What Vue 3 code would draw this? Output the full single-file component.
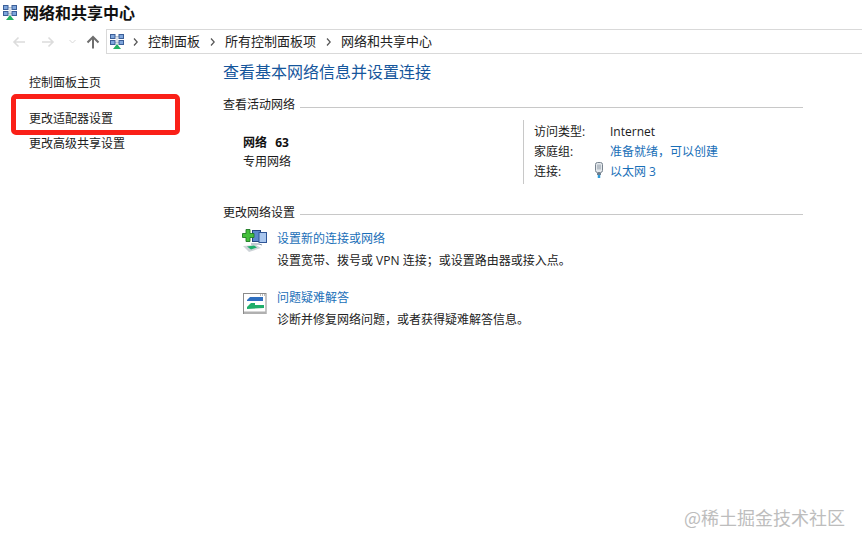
<script setup>
const crumbs = ['控制面板', '所有控制面板项', '网络和共享中心']
const sideLinks = [
  { text: '控制面板主页', cls: 'first' },
  { text: '更改适配器设置', cls: 'second' },
  { text: '更改高级共享设置', cls: 'third' }
]
</script>

<template>
  <div class="page">
    <header class="title-bar">
      <svg class="net-icon" viewBox="0 0 14 15" width="14" height="15">
        <path d="M5 2.500h4M5 8.500h4M7 2.500v8" stroke="#b9c6d4" fill="none" />
        <rect x=".5" y=".5" width="4.500" height="4" fill="#7fa6dc" stroke="#3c5f98" />
        <rect x="9" y=".5" width="4.500" height="4" fill="#7fa6dc" stroke="#3c5f98" />
        <rect x=".5" y="6.500" width="4.500" height="4" fill="#7fa6dc" stroke="#3c5f98" />
        <rect x="9" y="6.500" width="4.500" height="4" fill="#7fa6dc" stroke="#3c5f98" />
        <path d="M7 10l4 5H3z" fill="#22b060" />
      </svg>
      <h1 class="title">网络和共享中心</h1>
    </header>

    <nav class="nav-bar">
      <div class="nav-buttons">
        <svg width="14" height="12" viewBox="0 0 14 12" class="back"><path d="M13 6H2M6.500 1.500L2 6l4.500 4.500" fill="none" stroke="#dcdcdc" stroke-width="1.600" /></svg>
        <svg width="14" height="12" viewBox="0 0 14 12" class="forward"><path d="M1 6h11M7.500 1.500L12 6l-4.500 4.500" fill="none" stroke="#dcdcdc" stroke-width="1.600" /></svg>
        <svg width="7" height="5" viewBox="0 0 7 5" class="drop"><path d="M.5 1l3 3 3-3" fill="none" stroke="#d8d8d8" /></svg>
        <svg width="14" height="14" viewBox="0 0 14 14" class="up"><path d="M7 13.500V2M1.500 7.500L7 2l5.500 5.500" fill="none" stroke="#6e6e6e" stroke-width="2" /></svg>
      </div>
      <div class="address">
        <svg class="net-icon" viewBox="0 0 14 15" width="14" height="15">
          <path d="M5 2.500h4M5 8.500h4M7 2.500v8" stroke="#b9c6d4" fill="none" />
          <rect x=".5" y=".5" width="4.500" height="4" fill="#7fa6dc" stroke="#3c5f98" />
          <rect x="9" y=".5" width="4.500" height="4" fill="#7fa6dc" stroke="#3c5f98" />
          <rect x=".5" y="6.500" width="4.500" height="4" fill="#7fa6dc" stroke="#3c5f98" />
          <rect x="9" y="6.500" width="4.500" height="4" fill="#7fa6dc" stroke="#3c5f98" />
          <path d="M7 10l4 5H3z" fill="#22b060" />
        </svg>
        <template v-for="c in crumbs" :key="c">
          <svg class="chev" width="5" height="8" viewBox="0 0 5 8"><path d="M1 .5L4.200 4 1 7.500" fill="none" stroke="#555" stroke-width="1.200" /></svg>
          <span class="crumb">{{ c }}</span>
        </template>
      </div>
    </nav>

    <div class="body">
      <aside class="sidebar">
        <a v-for="l in sideLinks" :key="l.text" class="side-link" :class="l.cls">{{ l.text }}</a>
      </aside>

      <main class="main">
        <h2 class="heading">查看基本网络信息并设置连接</h2>

        <div class="section-head first-head"><span>查看活动网络</span><i class="rule"></i></div>
        <div class="active">
          <div class="net-name">
            <strong>网络&nbsp;&nbsp;<span class="num">63</span></strong>
            <span>专用网络</span>
          </div>
          <div class="net-info">
            <div class="info-row"><span class="label">访问类型:</span><span class="value">Internet</span></div>
            <div class="info-row"><span class="label">家庭组:</span><a class="value link">准备就绪，可以创建</a></div>
            <div class="info-row">
              <span class="label">连接:</span>
              <svg class="plug" width="10" height="16" viewBox="0 0 10 16">
                <rect x="1.500" y=".5" width="7" height="10" rx="2" fill="#e4e8ec" stroke="#77838f" />
                <path d="M4 2.500v5M6 2.500v5" stroke="#8c98a4" />
                <path d="M3 11h4v2H3z" fill="#6f8090" />
                <path d="M5 13v3" stroke="#2f9bd8" stroke-width="2.500" />
              </svg>
              <a class="value link">以太网 3</a>
            </div>
          </div>
        </div>

        <div class="section-head second-head"><span>更改网络设置</span><i class="rule"></i></div>

        <div class="task task-one">
          <svg class="task-icon" width="25" height="23" viewBox="0 0 25 23">
            <rect x="10.500" y="1.500" width="8" height="11" fill="#5c88cc" stroke="#24477f" />
            <rect x="17" y="3.500" width="7.500" height="10" fill="#a9c6ee" stroke="#2f5596" />
            <path d="M9 15h8l3 1" fill="none" stroke="#8795a5" />
            <path d="M1 17l13-1 5 3-12 4z" fill="#ced3d8" />
            <path d="M5 17.500l7-1 3 2-6 2z" fill="#1fae6a" />
            <path d="M4 .5h4v4h4v4H8v4H4v-4H.5v-4H4z" fill="#45c03c" stroke="#1f7a25" stroke-width=".9" />
          </svg>
          <div class="task-text">
            <a class="link">设置新的连接或网络</a>
            <p>设置宽带、拨号或 VPN 连接；或设置路由器或接入点。</p>
          </div>
        </div>

        <div class="task task-two">
          <svg class="task-icon" width="24" height="22" viewBox="0 0 24 22">
            <rect x=".5" y=".5" width="22.500" height="20" fill="#fff" stroke="#8b8b8b" />
            <rect x="1" y="18.500" width="22" height="2.500" fill="#b0b0b0" />
            <path d="M17 2h1M19 2h1M21 2h1" stroke="#777" />
            <path d="M4 7l3-3h13v4H4z" fill="#2f6fc0" />
            <path d="M4 14l4-4h4v2h9v3l-17 1z" fill="#1fae6a" />
          </svg>
          <div class="task-text">
            <a class="link">问题疑难解答</a>
            <p>诊断并修复网络问题，或者获得疑难解答信息。</p>
          </div>
        </div>
      </main>
    </div>

    <div class="highlight"></div>
    <div class="watermark">@稀土掘金技术社区</div>
  </div>
</template>

<style>
html, body { margin: 0; background: #fff; }
</style>

<style scoped>
.page {
  position: relative;
  width: 862px;
  height: 545px;
  overflow: hidden;
  background: #fff;
  color: #1a1a1a;
  font-family: "Open Sans", "Noto Sans CJK SC", sans-serif;
  font-size: 12px;
}
.title-bar {
  height: 24px;
  display: flex;
  align-items: center;
  padding-left: 3px;
  gap: 6px;
}
.title {
  margin: 0;
  font-size: 16px;
  font-weight: 700;
  line-height: 24px;
  color: #111;
  font-family: "Noto Sans CJK SC", sans-serif;
}
.nav-bar {
  height: 25px;
  margin-top: 5px;
  display: flex;
}
.nav-buttons {
  width: 106px;
  display: flex;
  align-items: center;
  flex: none;
}
.back { margin-left: 12px; }
.forward { margin-left: 15px; }
.drop { margin-left: 14px; }
.up { margin-left: 10px; }
.address {
  flex: 1;
  box-sizing: border-box;
  display: flex;
  align-items: center;
  padding-left: 3px;
  border: 1px solid #d9d9d9;
  border-right: 0;
  font-size: 13px;
  color: #222;
}
.chev { margin-left: 9px; margin-right: 10px; }
.crumb { line-height: 23px; }
.crumb + .chev { margin-left: 10px; margin-right: 10px; }
.body { display: flex; }
.sidebar {
  width: 223px;
  flex: none;
  display: flex;
  flex-direction: column;
  padding-left: 29px;
  box-sizing: border-box;
}
.side-link { line-height: 18px; color: #222; }
.first { margin-top: 20px; }
.second { margin-top: 18px; }
.third { margin-top: 7px; }
.main { width: 580px; flex: none; }
.heading {
  margin: 7px 0 0;
  font-size: 16px;
  font-weight: 400;
  line-height: 22px;
  color: #15569c;
}
.section-head {
  display: flex;
  align-items: center;
  gap: 5px;
  line-height: 18px;
  color: #1a1a1a;
}
.section-head .rule {
  flex: 1;
  height: 1px;
  background: #c8c8c8;
  position: relative;
  top: 2px;
}
.first-head { margin-top: 13px; }
.second-head { margin-top: 20px; }
.second-head .rule { top: 1px; }
.active {
  display: flex;
  margin-top: 6px;
  height: 64px;
}
.net-name {
  width: 300px;
  padding-left: 20px;
  box-sizing: border-box;
  display: flex;
  flex-direction: column;
  padding-top: 14px;
  gap: 1px;
  line-height: 18px;
}
.net-name strong { font-weight: 700; color: #111; }
.num { margin-left: 2px; }
.net-info {
  border-left: 1px solid #c8c8c8;
  padding-left: 10px;
  display: flex;
  flex-direction: column;
  padding-top: 2px;
  gap: 2px;
  width: 260px;
}
.info-row {
  position: relative;
  display: flex;
  align-items: center;
  height: 18px;
}
.label { width: 76px; flex: none; }
.plug { position: absolute; left: 60px; top: 0; }
.link { color: #1a6fb8; }
.task { display: flex; }
.task-icon { flex: none; }
.task-one { margin-top: 7px; padding-left: 19px; }
.task-two { margin-top: 23px; padding-left: 20px; }
.task-text { line-height: 18px; margin-left: 10px; }
.task-one .task-text { margin-top: 1px; }
.task-two .task-text { margin-top: -4px; }
.task-text a { display: block; }
.task-text p { margin: 4px 0 0; color: #222; }
.highlight {
  position: absolute;
  left: 11px;
  top: 94px;
  width: 169px;
  height: 41px;
  box-sizing: border-box;
  border: 5px solid #fa2018;
  border-radius: 5px;
}
.watermark {
  position: absolute;
  left: 684px;
  top: 505px;
  font-size: 18px;
  line-height: 24px;
  color: #bdbdbd;
  font-family: "Noto Sans CJK SC", sans-serif;
}
</style>
